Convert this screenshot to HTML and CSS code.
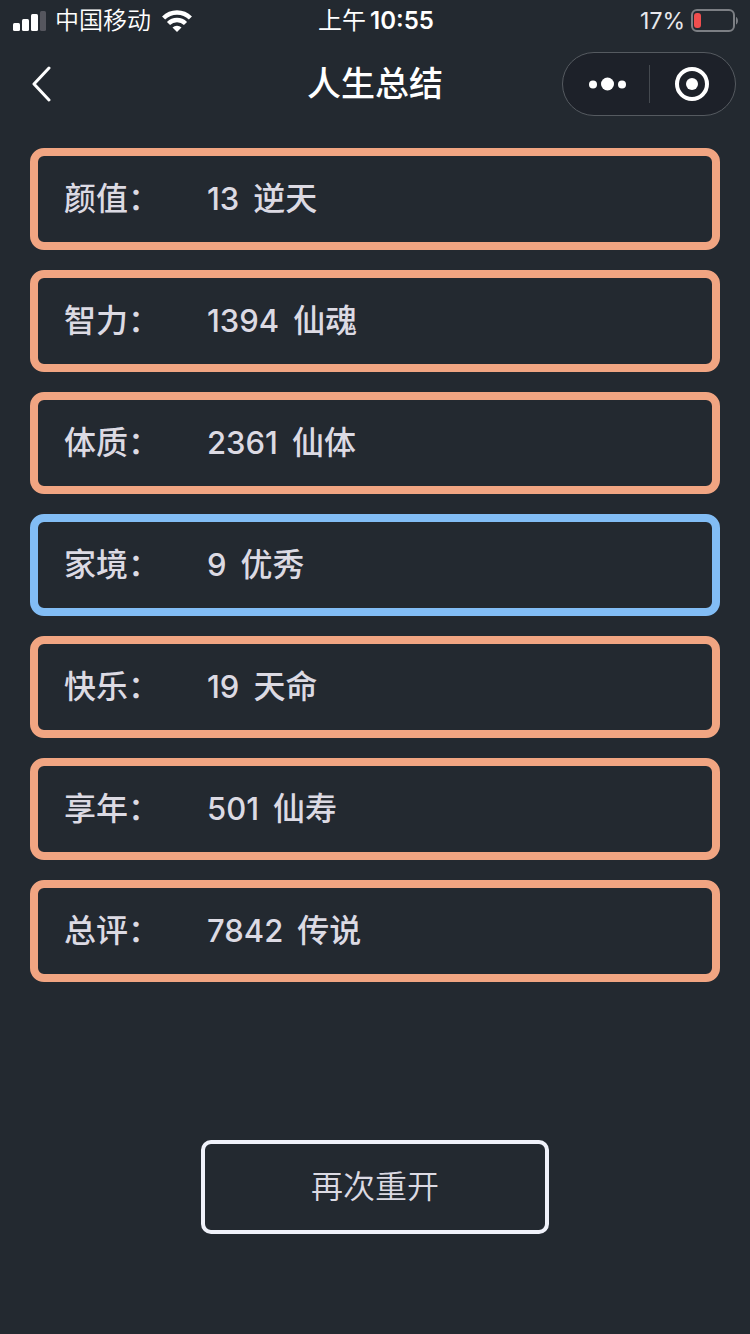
FILE: index.html
```html
<!DOCTYPE html>
<html lang="zh-CN">
<head>
    <meta charset="UTF-8">
    <meta name="viewport" content="width=device-width, initial-scale=1.0">
    <title>人生总结</title>
    <link rel="stylesheet" href="styles.css">
</head>
<body>
    <div class="status-bar">
        <div class="carrier">
            <svg class="signal" width="34" height="20" viewBox="0 0 34 20" aria-hidden="true">
                <rect x="0" y="12" width="7" height="8" rx="1.5" fill="#fff"/>
                <rect x="9" y="8" width="7" height="12" rx="1.5" fill="#fff"/>
                <rect x="18" y="3" width="7" height="17" rx="1.5" fill="#fff"/>
                <rect x="27" y="0" width="6" height="20" rx="1.5" fill="#55565e"/>
            </svg>
            <span>中国移动</span>
            <svg class="wifi" width="32" height="22" viewBox="0 0 32 22" aria-hidden="true">
                <g fill="none" stroke="#fff" stroke-width="4.4">
                    <path d="M2.600 8a19 19 0 0 1 26.800 0"/>
                    <path d="M7.500 13.500a12 12 0 0 1 17 0"/>
                </g>
                <path d="M16 22l-4.500-4.500a6.500 6.500 0 0 1 9 0z" fill="#fff"/>
            </svg>
        </div>
        <time class="time" datetime="10:55"><span>上午</span><span class="clock">10:55</span></time>
        <div class="power">
            <span>17%</span>
            <svg width="48" height="24" viewBox="0 0 48 24" aria-hidden="true">
                <rect x="1" y="1" width="42" height="21" rx="5" fill="none" stroke="#7c7f84" stroke-width="2"/>
                <rect x="3" y="4" width="7" height="15" rx="3" fill="#f04e4e"/>
                <path d="M45 8c2.600 1 2.600 6.500 0 7.500z" fill="#7c7f84"/>
            </svg>
        </div>
    </div>

    <header class="nav-bar">
        <button type="button" class="back" aria-label="返回">
            <svg width="20" height="36" viewBox="0 0 20 36" aria-hidden="true">
                <path d="M18 2L3 18l15 16" fill="none" stroke="#fff" stroke-width="3" stroke-linecap="round" stroke-linejoin="round"/>
            </svg>
        </button>
        <h1>人生总结</h1>
        <div class="capsule">
            <button type="button" aria-label="更多">
                <svg width="40" height="36" viewBox="0 0 40 36" fill="#fff" aria-hidden="true">
                    <circle cx="7" cy="18.500" r="4"/>
                    <circle cx="21.500" cy="18" r="6.500"/>
                    <circle cx="36" cy="18.500" r="4"/>
                </svg>
            </button>
            <button type="button" aria-label="关闭">
                <svg width="36" height="36" viewBox="0 0 36 36" aria-hidden="true">
                    <circle cx="18" cy="18" r="15" fill="none" stroke="#fff" stroke-width="4"/>
                    <circle cx="18" cy="18" r="6" fill="#fff"/>
                </svg>
            </button>
        </div>
    </header>

    <main>
        <dl class="summary">
            <div class="item"><dt>颜值：</dt><dd><span class="score">13</span><span>逆天</span></dd></div>
            <div class="item"><dt>智力：</dt><dd><span class="score">1394</span><span>仙魂</span></dd></div>
            <div class="item"><dt>体质：</dt><dd><span class="score">2361</span><span>仙体</span></dd></div>
            <div class="item blue"><dt>家境：</dt><dd><span class="score">9</span><span>优秀</span></dd></div>
            <div class="item"><dt>快乐：</dt><dd><span class="score">19</span><span>天命</span></dd></div>
            <div class="item"><dt>享年：</dt><dd><span class="score">501</span><span>仙寿</span></dd></div>
            <div class="item"><dt>总评：</dt><dd><span class="score">7842</span><span>传说</span></dd></div>
        </dl>
        <button type="button" class="restart">再次重开</button>
    </main>
</body>
</html>
```
FILE: styles.css
```css
* {
    box-sizing: border-box;
}
body {
    font-family: Inter, "Noto Sans CJK SC", sans-serif;
    background-color: #232930;
    color: #fff;
    margin: 0;
    min-height: 100vh;
}
button {
    background: none;
    border: none;
    padding: 0;
    color: inherit;
    font-family: inherit;
    cursor: pointer;
}
svg {
    display: block;
}
.status-bar {
    display: grid;
    grid-template-columns: 1fr auto 1fr;
    align-items: center;
    height: 40px;
    padding: 0 11px 0 13px;
    font-size: 24px;
    line-height: 42px;
}
.carrier, .power {
    display: flex;
    align-items: center;
}
.carrier {
    gap: 8px;
    font-weight: 350;
}
.wifi {
    margin-left: 2px;
}
.power {
    justify-content: flex-end;
    gap: 6px;
    font-size: 23px;
    color: #e8e8ec;
}
.time {
    display: flex;
    gap: 4px;
    font-weight: 400;
}
.clock {
    font-weight: 600;
}
.nav-bar {
    display: grid;
    grid-template-columns: 1fr auto 1fr;
    align-items: center;
    height: 88px;
    padding: 0 14px;
}
.back {
    justify-self: start;
    padding: 0 17px;
}
h1 {
    margin: 0;
    font-size: 34px;
    font-weight: 500;
    line-height: 44px;
}
.capsule {
    justify-self: end;
    display: flex;
    width: 174px;
    height: 64px;
    border: 1px solid #555a60;
    border-radius: 32px;
    background-color: #1d2129;
}
.capsule button {
    flex: 1;
    display: flex;
    justify-content: center;
    align-items: center;
    margin: 12px 0;
}
.capsule button + button {
    border-left: 1px solid #44494f;
}
main {
    padding: 20px 30px;
}
.summary {
    display: flex;
    flex-direction: column;
    gap: 20px;
    margin: 0;
}
.item {
    display: flex;
    align-items: center;
    height: 102px;
    padding: 0 26px;
    border: 8px solid #f1a582;
    border-radius: 14px;
    color: #dcdae3;
    font-size: 32px;
    font-weight: 500;
    line-height: 36px;
}
.item.blue {
    border-color: #82bdf5;
}
dt {
    width: 143px;
}
dd {
    display: flex;
    align-items: baseline;
    gap: 14px;
    margin: 0;
}
.score {
    font-size: 31px;
}
.restart {
    display: block;
    width: 348px;
    height: 94px;
    margin: 158px auto 0;
    border: 4px solid #f0f2fa;
    border-radius: 10px;
    color: #dcdae3;
    font-size: 32px;
    font-weight: 350;
    line-height: 36px;
}
```
